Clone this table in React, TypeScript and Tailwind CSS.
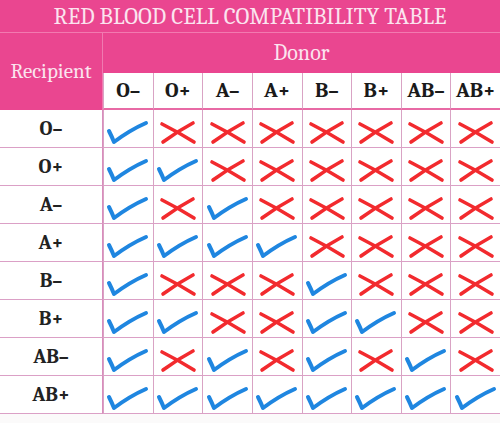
import React from "react";

// blood types in table order
const types = ["O–", "O+", "A–", "A+", "B–", "B+", "AB–", "AB+"];

// recipient rows x donor columns, true = compatible
const matrix: boolean[][] = [
  [true, false, false, false, false, false, false, false],
  [true, true, false, false, false, false, false, false],
  [true, false, true, false, false, false, false, false],
  [true, true, true, true, false, false, false, false],
  [true, false, false, false, true, false, false, false],
  [true, true, false, false, true, true, false, false],
  [true, false, true, false, true, false, true, false],
  [true, true, true, true, true, true, true, true],
];

const Check = () => (
  <svg width="48" height="38" viewBox="0 0 48 38" className="block">
    <path
      d="M5 21 Q8 27 10 32 Q26 20 42 13"
      fill="none"
      stroke="#1f86e0"
      strokeWidth="4"
      strokeLinecap="round"
      strokeLinejoin="round"
    />
  </svg>
);

const Cross = () => (
  <svg width="48" height="38" viewBox="0 0 48 38" className="block">
    <path
      d="M8 14 Q24 22 40 32 M9 32 Q24 21 39 13"
      fill="none"
      stroke="#f22a2e"
      strokeWidth="3.6"
      strokeLinecap="round"
    />
  </svg>
);

const App: React.FC = () => {
  return (
    <div className="w-[500px] h-[423px] bg-[#fbfafa] overflow-hidden font-serif">
      {/* Title band */}
      <div className="h-[33px] bg-[#ea4690] border-b border-[#f27ab0] flex items-center justify-center">
        <span className="font-serif text-[23px] text-[#fbe4ef] leading-none">
          RED BLOOD CELL COMPATIBILITY TABLE
        </span>
      </div>

      <div className="grid grid-cols-[103px_repeat(8,1fr)]">
        {/* Recipient label spans both header rows */}
        <div className="row-span-2 bg-[#ea4690] flex items-center justify-center border-r border-[#f07ab0]">
          <span className="font-serif text-[21px] text-[#fbe4ef] leading-none">Recipient</span>
        </div>
        <div className="col-span-8 h-[40px] bg-[#ea4690] flex items-center justify-center">
          <span className="font-serif text-[22px] text-[#fbe4ef] leading-none">Donor</span>
        </div>
        {types.map((t) => (
          <div
            key={t}
            className="h-[37px] bg-white border-l border-[#d9a3c4] border-b-2 border-b-[#e86aa5] flex items-center justify-center first:border-l-0"
          >
            <span className="font-serif text-[21px] font-bold text-[#1a1a1a] leading-none">{t}</span>
          </div>
        ))}

        {/* Data rows */}
        {matrix.map((row, r) => (
          <React.Fragment key={types[r]}>
            <div className="h-[38px] bg-white border-b border-[#dba0c6] border-r border-r-[#d98cbc] flex items-center justify-center">
              <span className="font-serif text-[20px] font-bold text-[#222] leading-none">{types[r]}</span>
            </div>
            {row.map((ok, c) => (
              <div
                key={c}
                className="h-[38px] bg-white border-b border-[#dba0c6] border-l border-l-[#d9a3c4] flex items-center justify-center overflow-hidden first:border-l-0"
              >
                {ok ? <Check /> : <Cross />}
              </div>
            ))}
          </React.Fragment>
        ))}
      </div>
    </div>
  );
};

export default App;
